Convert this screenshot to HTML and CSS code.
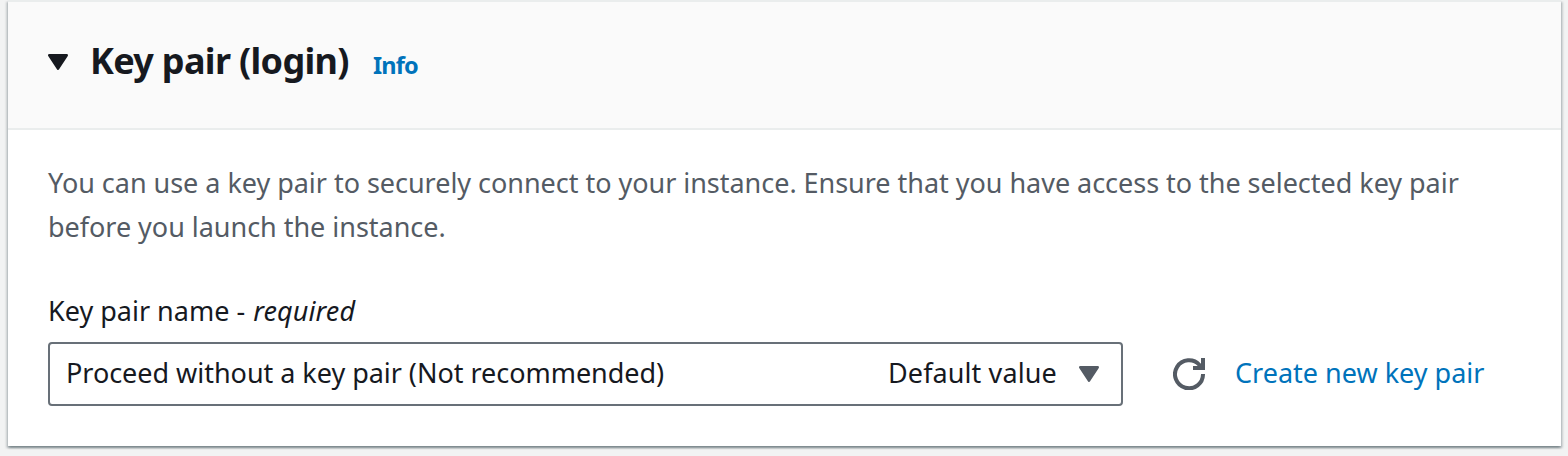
FILE: index.html
```html
<!DOCTYPE html>
<html lang="en">
<head>
<meta charset="utf-8">
<title>Key pair (login)</title>
<link rel="stylesheet" href="styles.css">
</head>
<body>
<section class="card">
  <header class="card-header">
    <svg class="caret" width="20" height="16" viewBox="0 0 20 16"><path d="M1.3 1.3h17.4L10 14.6z" fill="currentColor" stroke="currentColor" stroke-width="2.6" stroke-linejoin="round"/></svg>
    <h2 class="title">Key pair (login)</h2>
    <a class="info">Info</a>
  </header>
  <div class="card-body">
    <p class="description">You can use a key pair to securely connect to your instance. Ensure that you have access to the selected key pair<br>before you launch the instance.</p>
    <div class="label">Key pair name - <em class="required">required</em></div>
    <div class="row">
      <div class="select">
        <span class="value">Proceed without a key pair (Not recommended)</span>
        <span class="tag">Default value</span>
        <svg class="caret" width="20" height="16" viewBox="0 0 20 16"><path d="M1.3 1.3h17.4L10 14.6z" fill="currentColor" stroke="currentColor" stroke-width="2.6" stroke-linejoin="round"/></svg>
      </div>
      <svg class="refresh" width="32" height="32" viewBox="0 0 32 32" fill="none" stroke="currentColor" stroke-width="4"><path d="M30 16A14 14 0 1 1 26.5 7L29 10"/><path d="M30 0v10H20"/></svg>
      <a class="create">Create new key pair</a>
    </div>
  </div>
</section>
</body>
</html>
```
FILE: styles.css
```css
* { box-sizing: border-box; }
body {
  margin: 0;
  height: 456px;
  padding: 0 7px 0 8px;
  overflow: hidden;
  background: #f2f3f3;
  color: #16191f;
  font: 27px/44px "Noto Sans", sans-serif;
  white-space: nowrap;
}
.card {
  height: 446px;
  background: #fff;
  border-top: 2px solid #eaeded;
  box-shadow: 0 2px 2px rgba(0, 28, 36, .3), 2px 2px 2px rgba(0, 28, 36, .15), -2px 2px 2px rgba(0, 28, 36, .15);
}
.card-header {
  display: flex;
  align-items: baseline;
  height: 128px;
  padding: 37px 40px 0;
  background: #fafafa;
  border-bottom: 2px solid #eaeded;
}
.card-header .caret { margin-right: 22px; transform: translateY(-4px); }
.title { margin: 0 23px 0 0; font-size: 36px; line-height: 44px; font-weight: 700; width: 260px; letter-spacing: -.68px; }
.info { font-size: 23.5px; font-weight: 700; letter-spacing: -.8px; color: #0073bb; }
.card-body { padding: 31px 40px 0; }
.description { margin: 0 0 40px; color: #545b64; letter-spacing: -.03px; }
.label { margin-bottom: 9px; }
.required { margin-left: 1px; letter-spacing: .1px; }
.row { display: flex; align-items: center; }
.select {
  display: flex;
  align-items: center;
  width: 1075px;
  height: 64px;
  padding: 0 22px 0 16px;
  border: 2px solid #687078;
  border-radius: 4px;
}
.value { padding-bottom: 2px; letter-spacing: -.03px; }
.tag { width: 169px; margin: 0 22px 0 auto; padding-bottom: 2px; letter-spacing: .1px; }
.select .caret, .refresh { color: #545b64; }
.refresh { margin: 0 30px 0 50px; }
.create { padding-bottom: 2px; color: #0073bb; }
```
